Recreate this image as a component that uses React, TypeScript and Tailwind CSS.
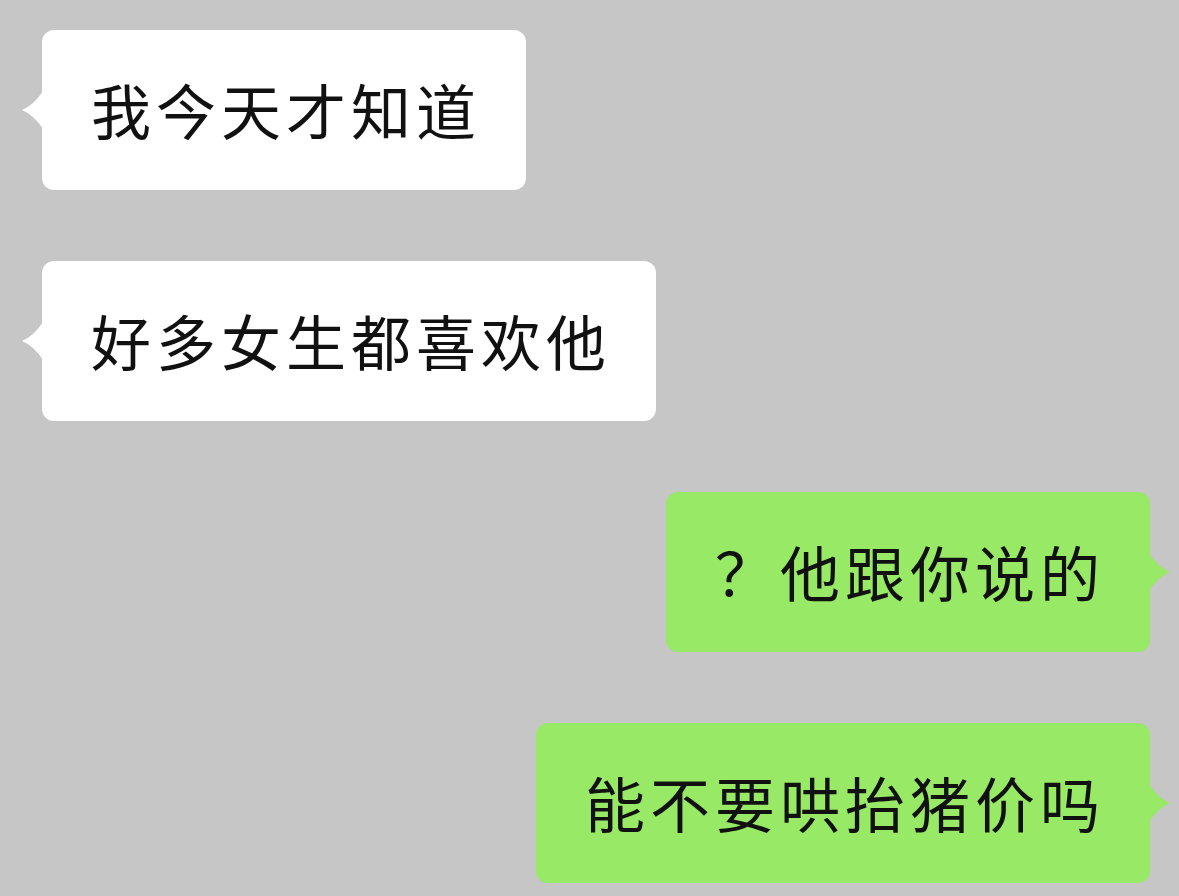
import React from "react";

function Tail({ side, color }: { side: "left" | "right"; color: string }) {
  const d =
    side === "left"
      ? "M21,0 Q12,14 0,19 Q12,24 21,38 Z"
      : "M0,0 Q9,14 21,19 Q9,24 0,38 Z";
  return (
    <svg
      width="21"
      height="38"
      viewBox="0 0 21 38"
      className={
        side === "left"
          ? "absolute top-1/2 -translate-y-1/2 -left-[20px]"
          : "absolute top-1/2 -translate-y-1/2 -right-[20px]"
      }
    >
      <path d={d} fill={color} />
    </svg>
  );
}

function Bubble({ text, mine }: { text: string; mine?: boolean }) {
  return (
    <div
      className={
        mine
          ? "relative h-[160px] flex items-center rounded-[12px] bg-[#98e966] pl-[49px] pr-[45px] self-end"
          : "relative h-[160px] flex items-center rounded-[12px] bg-white pl-[49px] pr-[45px] self-start"
      }
    >
      <Tail side={mine ? "right" : "left"} color={mine ? "#98e966" : "#ffffff"} />
      <span className="text-[60px] leading-none tracking-[5px] text-[#111111] whitespace-nowrap -translate-y-[1px]">
        {text}
      </span>
    </div>
  );
}

export default function App() {
  return (
    <div
      className="w-[1179px] h-[896px] overflow-hidden bg-[#c6c6c6] flex flex-col gap-[71px] pt-[30px] pl-[42px] pr-[29px]"
      style={{ fontFamily: '"Noto Sans CJK SC", "Noto Sans", sans-serif' }}
    >
      <Bubble text="我今天才知道" />
      <Bubble text="好多女生都喜欢他" />
      <Bubble text="？他跟你说的" mine />
      <Bubble text="能不要哄抬猪价吗" mine />
    </div>
  );
}
